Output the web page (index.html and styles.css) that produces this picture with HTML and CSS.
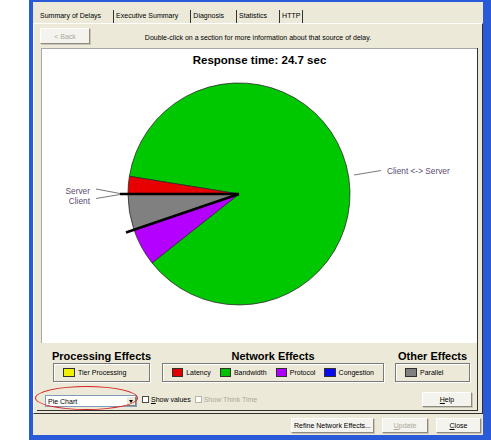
FILE: index.html
```html
<!DOCTYPE html>
<html>
<head>
<meta charset="utf-8">
<link rel="stylesheet" href="styles.css">
</head>
<body>
<div class="window">
  <div class="tabs">
    <span class="tab active">Summary of Delays</span>
    <span class="tab">Executive Summary</span>
    <span class="tab">Diagnosis</span>
    <span class="tab">Statistics</span>
    <span class="tab last">HTTP</span>
  </div>
  <div class="page">
    <div class="toolbar">
      <span class="btn back">&lt; Back</span>
      <span class="hint">Double-click on a section for more information about that source of delay.</span>
      <span></span>
    </div>
    <div class="frame">
      <div class="chart">
        <div class="chart-title">Response time: 24.7 sec</div>
        <svg class="pie" viewBox="42 49 435 294" preserveAspectRatio="none">
          <g stroke="#2b2b2b" stroke-width="0.8" stroke-linejoin="round">
            <path fill="#00c800" d="M239 194 L129.4 176.3 A111 111 0 1 1 152 262.9 Z"/>
            <path fill="#b400ff" d="M239 194 L152 262.9 A111 111 0 0 1 133.9 229.6 Z"/>
            <path fill="#808080" d="M239 194 L133.9 229.6 A111 111 0 0 1 128 194 Z"/>
            <path fill="#e80000" d="M239 194 L128 194 A111 111 0 0 1 129.4 176.3 Z"/>
          </g>
          <g stroke="#000" stroke-width="2.4">
            <line x1="239" y1="194" x2="120" y2="194"/>
            <line x1="239" y1="194" x2="126" y2="232.5"/>
          </g>
          <g stroke="#555" stroke-width="0.8">
            <line x1="96" y1="189" x2="120" y2="193.5"/>
            <line x1="96" y1="198.5" x2="120" y2="194.5"/>
            <line x1="354" y1="175" x2="381" y2="170.5"/>
          </g>
          <g class="plabel">
            <text x="90" y="194" text-anchor="end">Server</text>
            <text x="90" y="204" text-anchor="end">Client</text>
            <text x="387" y="174">Client &lt;-&gt; Server</text>
          </g>
        </svg>
      </div>
      <div class="legend">
        <div class="lgroup">
          <div class="lhead">Processing Effects</div>
          <div class="lbox proc">
            <span class="sw yellow"></span><span class="ltext">Tier Processing</span>
          </div>
        </div>
        <div class="lgroup">
          <div class="lhead">Network Effects</div>
          <div class="lbox net">
            <span class="sw red"></span><span class="ltext">Latency</span>
            <span class="sw green"></span><span class="ltext">Bandwidth</span>
            <span class="sw purple"></span><span class="ltext">Protocol</span>
            <span class="sw blue"></span><span class="ltext">Congestion</span>
          </div>
        </div>
        <div class="lgroup">
          <div class="lhead">Other Effects</div>
          <div class="lbox other">
            <span class="sw gray"></span><span class="ltext">Parallel</span>
          </div>
        </div>
      </div>
      <div class="controls">
        <span class="ring"></span>
        <div class="select"><span class="sel-text">Pie Chart</span><span class="sel-btn"><span class="tri"></span></span></div>
        <span class="check"></span><span class="clabel"><u>S</u>how values</span>
        <span class="check disabled"></span><span class="clabel disabled">Show Think Time</span>
        <span class="spacer"></span>
        <span class="btn help"><u>H</u>elp</span>
      </div>
    </div>
  </div>
  <div class="footer">
    <span class="btn refine">Refine Network Effects...</span>
    <span class="btn update"><u>U</u>pdate</span>
    <span class="btn close"><u>C</u>lose</span>
  </div>
</div>
</body>
</html>
```
FILE: styles.css
```css
html, body {
  margin: 0;
  padding: 0;
  background: #ffffff;
}
body {
  font-family: "Liberation Sans", Arial, sans-serif;
  font-size: 7px;
  color: #000;
}
.window {
  margin-left: 29px;
  width: 462px;
  height: 440px;
  box-sizing: border-box;
  border-style: solid;
  border-color: #2a5ad8;
  border-width: 2px 8px 5px 4px;
  background: #ece9d8;
  display: flex;
  flex-direction: column;
}
.tabs {
  height: 21px;
  display: flex;
  align-items: flex-end;
  padding-left: 7px;
  box-sizing: border-box;
}
.tab {
  height: 13px;
  line-height: 12px;
  padding: 0 12px 0 2px;
  border-left: 1px solid #333;
  white-space: nowrap;
}
.tab.active {
  border-left: none;
  padding-left: 0;
}
.tab.last {
  padding-right: 2px;
  border-right: 1px solid #333;
}
.page {
  flex: 1;
  display: flex;
  flex-direction: column;
  border: 1px solid;
  border-color: #ffffff #303030 #303030 #ffffff;
  box-sizing: border-box;
}
.toolbar {
  margin-top: 4px;
  height: 16px;
  display: grid;
  grid-template-columns: 1fr auto 1fr;
  align-items: center;
}
.hint {
  white-space: nowrap;
  padding-top: 2px;
}
.btn {
  display: inline-flex;
  align-items: center;
  justify-content: center;
  box-sizing: border-box;
  background: #f4f3ee;
  border: 1px solid;
  border-color: #ffffff #8e8b7e #8e8b7e #ffffff;
  box-shadow: 1px 1px 0 #c9c6b8;
  white-space: nowrap;
}
.back {
  margin-left: 6px;
  width: 50px;
  height: 16px;
  color: #aca899;
  justify-self: start;
}
.frame {
  margin: 4px 4px 0 3px;
  height: 363px;
  box-sizing: border-box;
  border-right: 1px solid #303030;
  border-bottom: 1px solid #303030;
  display: flex;
  flex-direction: column;
}
.chart {
  position: relative;
  margin-left: 4px;
  height: 295px;
  background: #ffffff;
  border-top: 1px solid #a7a6aa;
  border-left: 1px solid #a7a6aa;
  box-sizing: border-box;
}
.chart-title {
  padding-top: 3px;
  line-height: 16px;
  text-align: center;
  font-weight: bold;
  font-size: 11.5px;
}
.pie {
  position: absolute;
  left: 0;
  top: 0;
  width: 100%;
  height: 100%;
}
.plabel text {
  font-family: "Liberation Sans", Arial, sans-serif;
  font-size: 8.3px;
  fill: #5a4a70;
}
.legend {
  height: 43px;
  box-sizing: border-box;
  padding: 7px 0 0 15px;
  display: flex;
  gap: 11px;
}
.lgroup {
  display: flex;
  flex-direction: column;
  align-items: center;
}
.lhead {
  font-weight: bold;
  font-size: 11px;
  line-height: 13px;
  white-space: nowrap;
}
.lbox {
  height: 19px;
  box-sizing: border-box;
  border: 1px solid #7a7a7a;
  box-shadow: inset 1px 1px 0 #ffffff, 1px 1px 0 #ffffff;
  display: flex;
  align-items: center;
  padding-left: 9px;
}
.proc { width: 97px; }
.net { width: 222px; }
.other { width: 75px; }
.sw {
  width: 12px;
  height: 9px;
  box-sizing: border-box;
  border: 1px solid #303030;
  margin-right: 3px;
}
.ltext {
  margin-right: 9px;
  white-space: nowrap;
}
.yellow { background: #f0f000; }
.red { background: #e00000; }
.green { background: #00c000; }
.purple { background: #b000ff; }
.blue { background: #0a0af0; }
.gray { background: #808080; }
.controls {
  position: relative;
  flex: 1;
  display: flex;
  align-items: flex-start;
  padding-left: 8px;
}
.ring {
  position: absolute;
  left: -2px;
  top: 0;
  width: 103px;
  height: 24px;
  box-sizing: border-box;
  border: 1px solid #d42020;
  border-radius: 50%;
}
.select {
  margin-top: 9px;
  width: 92px;
  height: 12px;
  box-sizing: border-box;
  background: #ffffff;
  border: 1px solid;
  border-color: #7f9db9;
  display: flex;
  align-items: center;
}
.sel-text {
  flex: 1;
  padding-left: 2px;
}
.sel-btn {
  width: 10px;
  height: 10px;
  box-sizing: border-box;
  background: #ece9d8;
  border: 1px solid;
  border-color: #ffffff #808080 #808080 #ffffff;
  display: flex;
  align-items: center;
  justify-content: center;
}
.tri {
  width: 0;
  height: 0;
  border-left: 2.5px solid transparent;
  border-right: 2.5px solid transparent;
  border-top: 3px solid #000;
}
.check {
  margin: 10px 2px 0 5px;
  width: 7px;
  height: 7px;
  box-sizing: border-box;
  background: #ffffff;
  border: 1px solid #4a4a4a;
}
.check.disabled {
  border-color: #b8b4a4;
  margin-left: 4px;
}
.clabel {
  margin-top: 9px;
  line-height: 9px;
  white-space: nowrap;
}
.clabel.disabled {
  color: #aca899;
}
.spacer { flex: 1; }
.help {
  margin: 6px 5px 0 0;
  width: 50px;
  height: 15px;
}
.footer {
  height: 21px;
  display: flex;
  justify-content: flex-end;
  align-items: flex-start;
  padding: 4px 2px 0 0;
  box-sizing: border-box;
}
.footer .btn {
  height: 15px;
  margin-left: 8px;
}
.refine { width: 83px; }
.update { width: 46px; color: #aca899; }
.close { width: 45px; }
```
